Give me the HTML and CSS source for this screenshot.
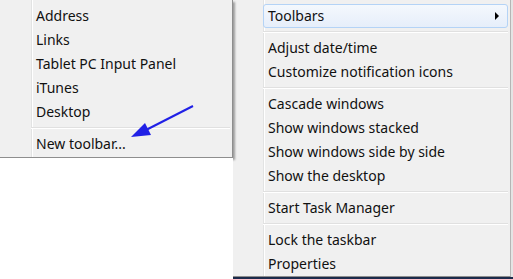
FILE: index.html
```html
<!DOCTYPE html>
<html>
<head>
<meta charset="utf-8">
<link rel="stylesheet" href="styles.css">
</head>
<body>
<div class="screen">
  <div class="left">
    <div class="menu sub">
      <div class="item">Address</div>
      <div class="item">Links</div>
      <div class="item">Tablet PC Input Panel</div>
      <div class="item">iTunes</div>
      <div class="item">Desktop</div>
      <div class="sep"></div>
      <div class="item">New toolbar...</div>
    </div>
    <div class="blank"></div>
  </div>
  <div class="right">
    <div class="menu main">
      <div class="item hl">Toolbars<span class="arrow"></span></div>
      <div class="sep"></div>
      <div class="item">Adjust date/time</div>
      <div class="item">Customize notification icons</div>
      <div class="sep"></div>
      <div class="item">Cascade windows</div>
      <div class="item">Show windows stacked</div>
      <div class="item">Show windows side by side</div>
      <div class="item">Show the desktop</div>
      <div class="sep"></div>
      <div class="item">Start Task Manager</div>
      <div class="sep"></div>
      <div class="item">Lock the taskbar</div>
      <div class="item">Properties</div>
    </div>
    <div class="taskbar"></div>
  </div>
  <svg class="pointer" width="513" height="279" viewBox="0 0 513 279">
    <line x1="193" y1="106" x2="146" y2="130" stroke="#2020e6" stroke-width="2"/>
    <polygon points="131,137 145,123 151,135" fill="#2020e6"/>
  </svg>
</div>
</body>
</html>
```
FILE: styles.css
```css
html, body {
  margin: 0;
  padding: 0;
  background: #ffffff;
}
.screen {
  position: relative;
  width: 513px;
  height: 279px;
  overflow: hidden;
  display: flex;
  font-family: "Noto Sans", "Open Sans", sans-serif;
  font-size: 14px;
  color: #111;
}
.left {
  width: 233px;
  margin-right: -2px;
  position: relative;
  z-index: 2;
  display: flex;
  flex-direction: column;
}
.menu {
  background-color: #f0f0f0;
  padding-top: 4px;
  box-sizing: border-box;
}
.sub {
  border-right: 1px solid #8e8e8e;
  border-bottom: 1px solid #8e8e8e;
  padding-bottom: 1px;
  box-shadow: 2px 2px 2px rgba(0, 0, 0, 0.35);
  background-image: linear-gradient(to right, transparent 31px, #e2e3e3 31px, #e2e3e3 32px, #ffffff 32px, #ffffff 33px, transparent 33px);
}
.blank {
  flex: 1;
  background: #ffffff;
}
.right {
  width: 282px;
  display: flex;
  flex-direction: column;
  background: #e4e4e4;
}
.main {
  width: 280px;
  flex: 0 0 277px;
  border-left: 1px solid #8e8e8e;
  border-right: 1px solid #b5b5b5;
  border-bottom: 1px solid #8e8e8e;
  background-image: linear-gradient(to right, transparent 31px, #e2e3e3 31px, #e2e3e3 32px, #ffffff 32px, #ffffff 33px, transparent 33px);
}
.taskbar {
  flex: 1;
  background: #1b2a4a;
}
.item {
  height: 24px;
  line-height: 22px;
  box-sizing: border-box;
  margin: 0 2px 0 31px;
  padding-left: 4px;
  border: 1px solid transparent;
  display: flex;
  align-items: center;
  white-space: nowrap;
}
.item.hl {
  border-color: #b4d3f6;
  border-radius: 3px;
  background: linear-gradient(#f4f8fd, #e6eefa);
}
.arrow {
  margin-left: auto;
  margin-right: 8px;
  width: 0;
  height: 0;
  border-top: 4px solid transparent;
  border-bottom: 4px solid transparent;
  border-left: 4px solid #000;
}
.sep {
  height: 2px;
  margin: 3px 2px 3px 31px;
  border-top: 1px solid #e0e0e0;
  border-bottom: 1px solid #ffffff;
  box-sizing: border-box;
}
.pointer {
  position: absolute;
  left: 0;
  top: 0;
  z-index: 5;
  pointer-events: none;
}
```
